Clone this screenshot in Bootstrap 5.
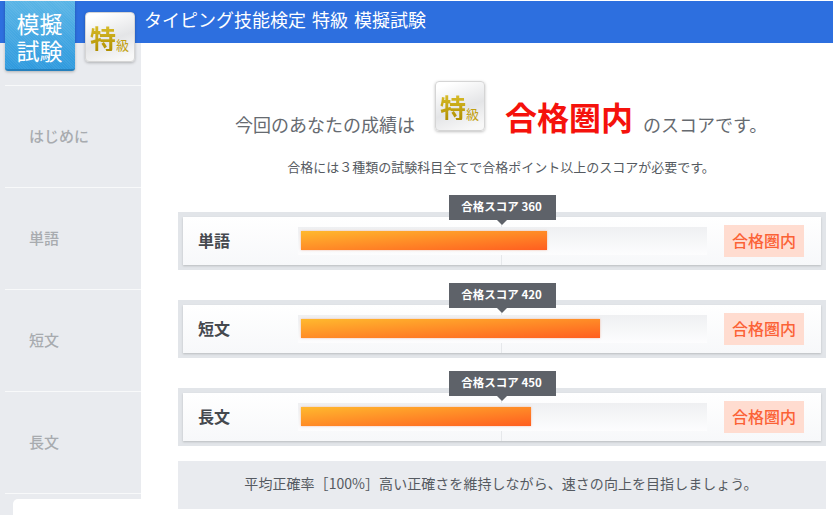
<!DOCTYPE html>
<html lang="ja">
<head>
  <meta charset="UTF-8" />
  <meta name="viewport" content="width=device-width, initial-scale=1.0"/>
  <title>タイピング技能検定 特級 模擬試験</title>
  <link href="https://cdn.jsdelivr.net/npm/bootstrap@5.3.3/dist/css/bootstrap.min.css" rel="stylesheet">
  <style>
    html, body { height: 515px; overflow: hidden; }
    body { font-family: "Noto Sans CJK JP", "Noto Sans", sans-serif; background: #fff; color: #555a61; }
    .page { width: 833px; height: 515px; position: relative; overflow: hidden; }
    .top-bar { height: 42px; margin-top: 1px; background: #2d6fdf; color: #fff; font-size: 18px; line-height: 36px; padding-left: 144px; word-spacing: 2px; }
    .exam-logo { position: absolute; left: 5px; top: 1px; width: 70px; height: 70px; z-index: 3; background: repeating-linear-gradient(45deg, rgba(255,255,255,.06) 0 1px, transparent 1px 2px), linear-gradient(#5ab5e6, #2f9ade); border-bottom: 2px solid #2580bd; border-radius: 0 0 3px 3px; color: #fff; font-size: 23px; line-height: 27px; text-align: center; padding: 9px 1px 0 0; box-shadow: 0 1px 3px rgba(0,0,0,.25); }
    .grade-icon { width: 50px; height: 50px; border: 1px solid #d5d5d5; border-radius: 4px; background: linear-gradient(160deg, #fff 10%, #e4e5e7 55%, #f8f8f8 90%); box-shadow: 0 1px 3px rgba(0,0,0,.25); display: flex; align-items: flex-end; justify-content: center; padding: 0 1px 10px 0; color: #c2a010; line-height: 1; flex-shrink: 0; }
    .grade-icon b { font-size: 26px; font-weight: 700; background: linear-gradient(#d9bd2a, #b08f00); -webkit-background-clip: text; background-clip: text; color: transparent; }
    .grade-icon span { font-size: 13px; margin-left: 0; }
    .grade-top { position: absolute; left: 85px; top: 12px; z-index: 3; }
    .side-col { width: 141px; height: 472px; background: #e9ebef; padding: 42px 0 0 5px; position: relative; flex-shrink: 0; }
    .side-item { height: 102px; border-top: 1px solid #f8f9fa; display: flex; align-items: center; padding-left: 24px; color: #a8abaf; font-size: 15px; font-weight: 500; }
    .side-last { position: absolute; left: 13px; top: 456px; width: 128px; height: 30px; background: #fff; border-radius: 5px 0 0 0; }
    .main-col { width: 692px; padding: 0 7px 0 37px; }
    .result-line { height: 52px; margin-top: 38px; margin-left: 57px; font-size: 18px; color: #666a70; line-height: 1; }
    .result-word { color: #f5120c; font-size: 32px; font-weight: 700; margin: 0 10px 1px 20px; line-height: 1; }
    .result-line .grade-icon { margin-left: 20px; align-self: flex-start; }
    .note-line { font-size: 13px; text-align: center; margin: 25px 0 0; line-height: 18px; color: #555a61; padding-right: 2px; }
    .score-row { height: 58px; background: #e2e5e9; padding: 5px; margin-bottom: 30px; position: relative; }
    .score-first { margin-top: 36px; }
    .score-inner { height: 48px; background: linear-gradient(#fff, #f7f8fa); box-shadow: 0 1px 2px rgba(0,0,0,.18); position: relative; padding-left: 15px; padding-right: 17px; }
    .score-name { width: 100px; font-size: 16px; font-weight: 700; color: #45494f; padding-bottom: 2px; }
    .track { width: 409px; height: 28px; background: linear-gradient(#eff0f2, #fdfdfe); padding: 4px 3px; position: relative; }
    .fill { height: 19px; background: linear-gradient(to bottom right, #ffb92e, #ff5e20); box-shadow: 0 0 2px rgba(240,120,80,.5); }
    .pass-tag { width: 80px; height: 32px; margin-left: 17px; background: #ffdcd0; color: #fb6236; font-size: 16px; font-weight: 500; text-align: center; line-height: 30px; }
    .mark-line { position: absolute; left: 318px; top: 0; bottom: 0; width: 1px; background: #e6e8eb; }
    .score-tip { position: absolute; left: 271px; top: -17px; width: 107px; height: 25px; background: #5e6269; color: #fff; font-size: 11.5px; font-weight: 700; text-align: center; line-height: 23px; z-index: 2; padding-right: 2px; }
    .score-tip::after { content: ""; position: absolute; left: 48px; top: 25px; border: 5px solid transparent; border-top-color: #5e6269; border-bottom: 0; }
    .advice { height: 48px; margin-top: -15px; background: #e9ebef; font-size: 14px; letter-spacing: .05px; text-align: center; line-height: 44px; color: #555a61; padding-right: 2px; }
  </style>
</head>
<body>
  <div class="page">
    <div class="top-bar">タイピング技能検定 特級 模擬試験</div>
    <div class="exam-logo">模擬<br>試験</div>
    <div class="grade-icon grade-top"><b>特</b><span>級</span></div>

    <div class="d-flex">
      <!-- 左メニュー -->
      <div class="side-col">
        <div class="side-item">はじめに</div>
        <div class="side-item">単語</div>
        <div class="side-item">短文</div>
        <div class="side-item">長文</div>
        <div class="side-item"></div>
        <div class="side-last"></div>
      </div>

      <!-- 結果 -->
      <div class="main-col">
        <div class="result-line d-flex align-items-end">
          <span>今回のあなたの成績は</span>
          <div class="grade-icon"><b>特</b><span>級</span></div>
          <span class="result-word">合格圏内</span>
          <span>のスコアです。</span>
        </div>
        <p class="note-line">合格には３種類の試験科目全てで合格ポイント以上のスコアが必要です。</p>

        <div class="score-row score-first">
          <div class="score-tip">合格スコア 360</div>
          <div class="score-inner d-flex align-items-center">
            <div class="mark-line"></div>
            <div class="score-name">単語</div>
            <div class="track"><div class="fill" style="width: 246px"></div></div>
            <div class="pass-tag">合格圏内</div>
          </div>
        </div>
        <div class="score-row">
          <div class="score-tip">合格スコア 420</div>
          <div class="score-inner d-flex align-items-center">
            <div class="mark-line"></div>
            <div class="score-name">短文</div>
            <div class="track"><div class="fill" style="width: 299px"></div></div>
            <div class="pass-tag">合格圏内</div>
          </div>
        </div>
        <div class="score-row">
          <div class="score-tip">合格スコア 450</div>
          <div class="score-inner d-flex align-items-center">
            <div class="mark-line"></div>
            <div class="score-name">長文</div>
            <div class="track"><div class="fill" style="width: 230px"></div></div>
            <div class="pass-tag">合格圏内</div>
          </div>
        </div>
        <div class="advice">平均正確率［100%］高い正確さを維持しながら、速さの向上を目指しましょう。</div>
      </div>
    </div>
  </div>
  <script src="https://cdn.jsdelivr.net/npm/bootstrap@5.3.3/dist/js/bootstrap.bundle.min.js"></script>
</body>
</html>
